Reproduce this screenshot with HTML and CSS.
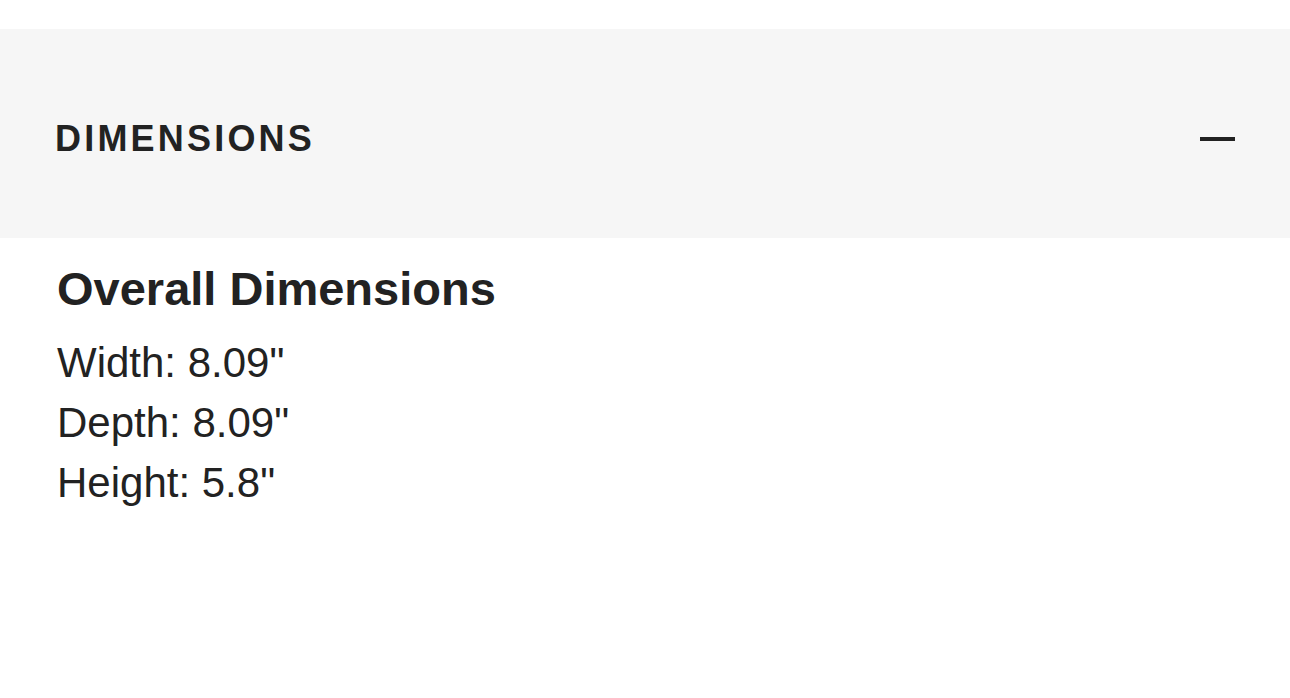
FILE: index.html
```html
<!DOCTYPE html>
<html lang="en">
<head>
<meta charset="utf-8">
<title>Dimensions</title>
<link rel="stylesheet" href="styles.css">
</head>
<body>
<section class="accordion">
  <div class="accordion-header">
    <h2 class="accordion-title">DIMENSIONS</h2>
    <span class="accordion-toggle" aria-hidden="true"></span>
  </div>
  <div class="accordion-body">
    <h3 class="dims-title">Overall Dimensions</h3>
    <ul class="dims-list">
      <li>Width: 8.09"</li>
      <li>Depth: 8.09"</li>
      <li>Height: 5.8"</li>
    </ul>
  </div>
</section>
</body>
</html>
```
FILE: styles.css
```css
html, body {
  margin: 0;
  padding: 0;
  background: #ffffff;
}
body {
  font-family: "Liberation Sans", Arial, sans-serif;
  color: #222222;
}
.accordion {
  padding-top: 29px;
}
.accordion-header {
  background: #f6f6f6;
  height: 209px;
  box-sizing: border-box;
  padding: 10px 55px 0 55px;
  display: flex;
  align-items: center;
  justify-content: space-between;
}
.accordion-title {
  margin: 0;
  font-size: 36px;
  line-height: 1;
  font-weight: 700;
  letter-spacing: 3.2px;
}
.accordion-toggle {
  display: block;
  width: 35px;
  height: 4px;
  background: #222222;
}
.accordion-body {
  padding: 23px 57px 0 57px;
}
.dims-title {
  margin: 0 0 16px 0;
  font-size: 47px;
  line-height: 56px;
  font-weight: 700;
}
.dims-list {
  list-style: none;
  margin: 0;
  padding: 0;
  font-size: 42px;
  line-height: 60px;
}
```
